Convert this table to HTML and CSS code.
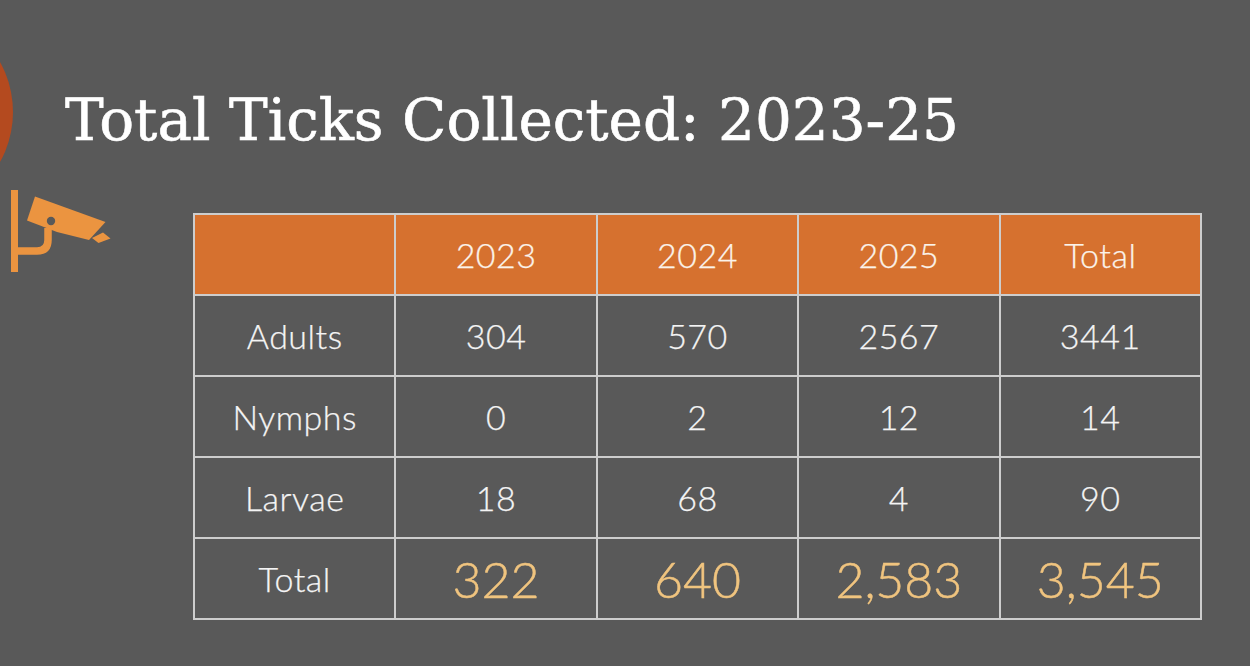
FILE: index.html
```html
<!DOCTYPE html>
<html lang="en">
<head>
<meta charset="utf-8">
<title>Total Ticks Collected: 2023-25</title>
<link rel="stylesheet" href="styles.css">
</head>
<body>
<div class="slide">
  <div class="deco-circle"></div>
  <h1 class="title">Total Ticks Collected: 2023-25</h1>
  <div class="content">
    <svg class="cam" viewBox="0 185 120 95" width="120" height="95" aria-hidden="true">
      <rect x="11" y="190" width="7" height="82" fill="#eb9440"/>
      <path d="M17 251 H37 Q48 251 48 240 V228" fill="none" stroke="#eb9440" stroke-width="7.5"/>
      <polygon points="35,196.5 105.5,222 89,240 57,232 27,220.5" fill="#eb9440"/>
      <circle cx="51" cy="221" r="4.2" fill="#595959"/>
      <polygon points="92,238 103,232.5 110.5,238.5 98.5,243" fill="#eb9440"/>
    </svg>
    <table class="ticks">
      <thead>
        <tr><th></th><th>2023</th><th>2024</th><th>2025</th><th>Total</th></tr>
      </thead>
      <tbody>
        <tr><td>Adults</td><td>304</td><td>570</td><td>2567</td><td>3441</td></tr>
        <tr><td>Nymphs</td><td>0</td><td>2</td><td>12</td><td>14</td></tr>
        <tr><td>Larvae</td><td>18</td><td>68</td><td>4</td><td>90</td></tr>
        <tr class="sum"><td>Total</td><td class="big">322</td><td class="big">640</td><td class="big">2,583</td><td class="big">3,545</td></tr>
      </tbody>
    </table>
  </div>
</div>
</body>
</html>
```
FILE: styles.css
```css
html, body {
  margin: 0;
  padding: 0;
  background: #595959;
}
.slide {
  position: relative;
  width: 1250px;
  height: 666px;
  overflow: hidden;
  background: #595959;
}
.deco-circle {
  position: absolute;
  left: -193px;
  top: 9px;
  width: 206px;
  height: 206px;
  border-radius: 50%;
  background: #b44a1f;
}
.title {
  margin: 0;
  padding: 85px 0 0 65px;
  font-family: "DejaVu Serif", "Liberation Serif", serif;
  font-weight: normal;
  font-size: 58px;
  line-height: 70px;
  color: #ffffff;
  white-space: nowrap;
  -webkit-text-stroke: 0.6px #ffffff;
}
.content {
  display: flex;
  align-items: flex-start;
  margin-top: 30px;
}
.cam {
  display: block;
  flex: none;
  margin-right: 73px;
}
.ticks {
  margin-top: 28px;
  border-collapse: collapse;
  table-layout: fixed;
  width: 1009px;
  font-family: Lato, "Open Sans", sans-serif;
  color: #f4f4f4;
}
.ticks th, .ticks td {
  border: 2px solid #cdcdcd;
  height: 79px;
  padding: 0;
  text-align: center;
  vertical-align: middle;
  font-size: 34px;
  font-weight: 300;
  letter-spacing: 0.5px;
  -webkit-text-stroke: 0.25px currentColor;
}
.ticks thead th {
  background: #d6712f;
  color: #fbf3ea;
}
.ticks td.big {
  font-size: 50px;
  color: #f0c47f;
  letter-spacing: 0;
  -webkit-text-stroke: 0.5px #f0c47f;
}
```
